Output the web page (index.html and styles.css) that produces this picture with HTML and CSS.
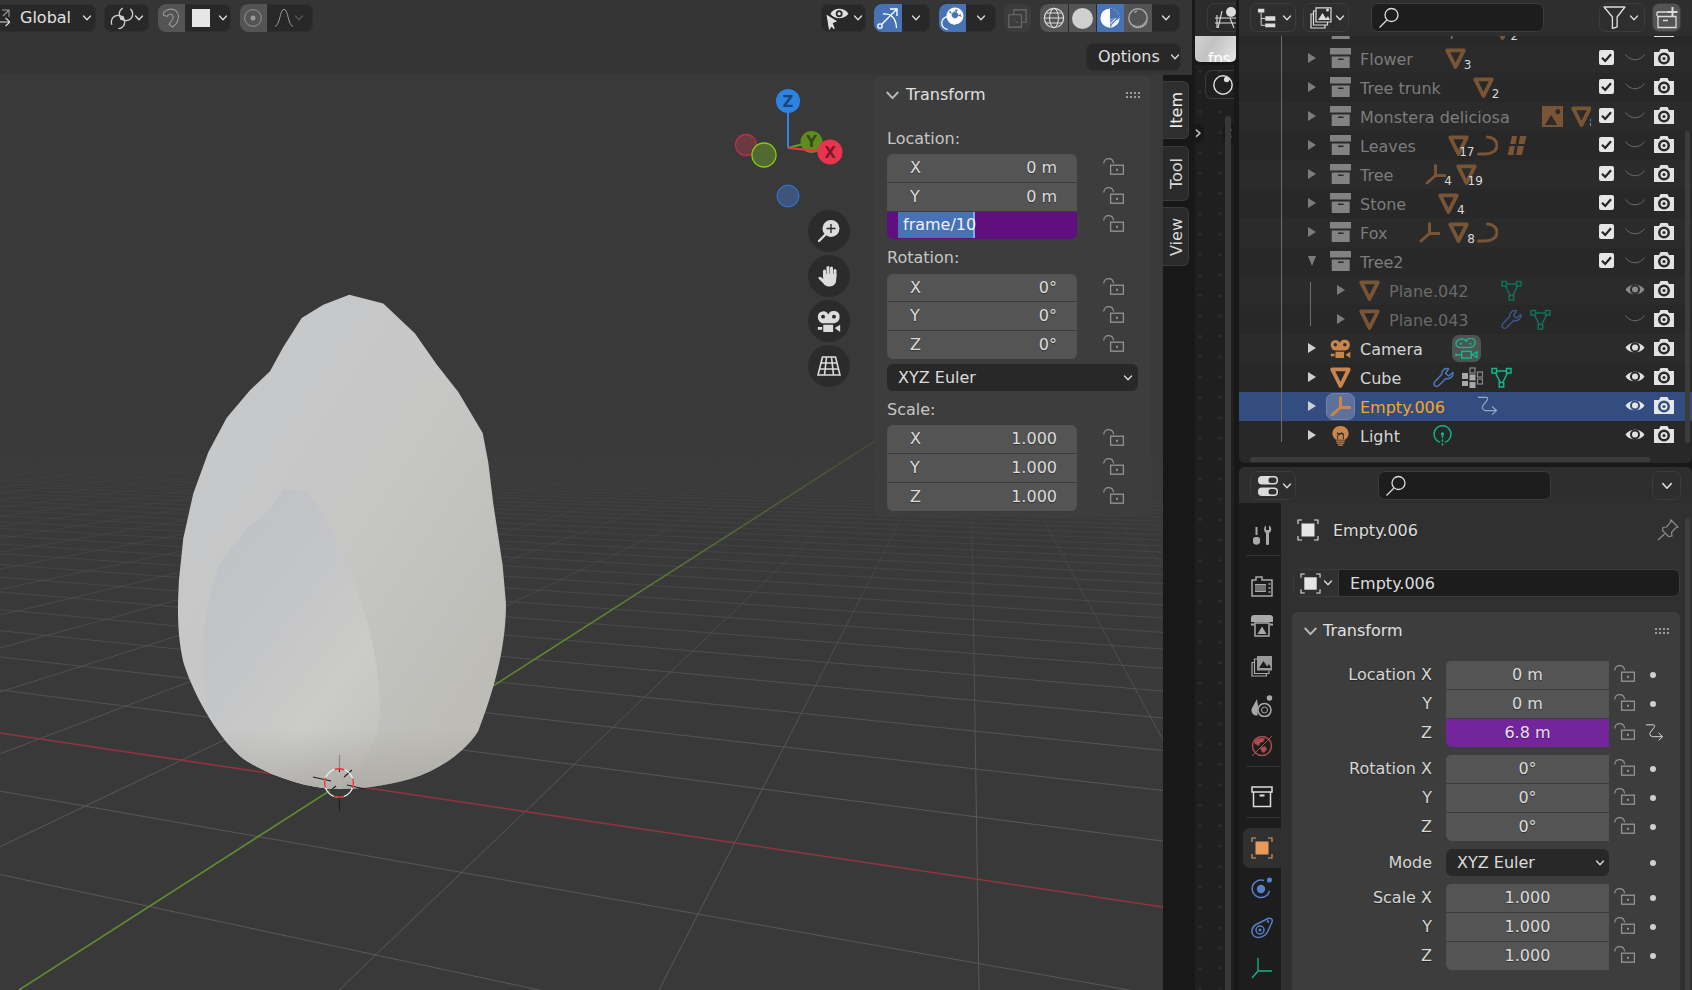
FILE: index.html
```html
<!DOCTYPE html>
<html lang="en">
<head>
<meta charset="utf-8">
<title>Blender</title>
<link rel="stylesheet" href="styles.css">
</head>
<body>
<svg class="defs" aria-hidden="true">
  <symbol id="chev" viewBox="0 0 10 10"><path d="M1.5 3 5 6.8 8.5 3" fill="none" stroke="currentColor" stroke-width="1.3" stroke-linecap="round" stroke-linejoin="round"/></symbol>
  <symbol id="lock" viewBox="0 0 21 17"><path d="M.8 5.6C.8 2.6 3 .7 5.6.7c2.6 0 4.6 1.7 5 4.6" fill="none" stroke="currentColor" stroke-width="1.2"/><rect x="7.6" y="7.2" width="12.8" height="9" fill="none" stroke="currentColor" stroke-width="1.3"/><rect x="13" y="10.8" width="2" height="2" fill="currentColor"/></symbol>
  <symbol id="grip" viewBox="0 0 15 6"><g fill="currentColor"><rect x="0" y="0" width="2" height="2"/><rect x="4" y="0" width="2" height="2"/><rect x="8" y="0" width="2" height="2"/><rect x="12" y="0" width="2" height="2"/><rect x="0" y="4" width="2" height="2"/><rect x="4" y="4" width="2" height="2"/><rect x="8" y="4" width="2" height="2"/><rect x="12" y="4" width="2" height="2"/></g></symbol>
  <symbol id="tri" viewBox="0 0 21 21"><path d="M2.2 2.4H18.800L10.500 19Z" fill="none" stroke="currentColor" stroke-width="3.800" stroke-linejoin="round"/></symbol>
  <symbol id="empty" viewBox="0 0 21 21"><path d="M10.5 1.5V11.5H20M10.5 11.5 2 19" fill="none" stroke="currentColor" stroke-width="3" stroke-linecap="round"/></symbol>
  <symbol id="curve" viewBox="0 0 21 21"><path d="M1.5 19H8C15 19 20 15.5 20 10.5 20 5.5 15.5 2 10.5 2" fill="none" stroke="currentColor" stroke-width="3" stroke-linecap="round"/></symbol>
  <symbol id="hair" viewBox="0 0 21 21"><path d="M6 1H11L9.6 9H4.2ZM14 1H20.5L18.5 9H12.6ZM3.6 11H8.8L7.4 20H1.6ZM11.8 11H18L16 20H10Z" fill="currentColor"/></symbol>
  <symbol id="image" viewBox="0 0 22 22"><path d="M0 0H22V22H0ZM3 20H16L9.5 9.5ZM14 6a2.6 2.6 0 1 0 5.2 0 2.6 2.6 0 1 0-5.2 0Z" fill="currentColor" fill-rule="evenodd"/></symbol>
  <symbol id="collection" viewBox="0 0 21 21"><path d="M0 0H21V6.4H0ZM1.7 8.5H19.7V20H1.7ZM8 10.4V12H13.6V10.4Z" fill="currentColor" fill-rule="evenodd"/></symbol>
  <symbol id="check" viewBox="0 0 15 15"><rect width="15" height="15" rx="2" fill="#e6e6e6"/><path d="M3 7.8 6.2 11 12 4.2" fill="none" stroke="#222" stroke-width="2.2"/></symbol>
  <symbol id="eye" viewBox="0 0 20 15"><path d="M.5 7.5C4.5 1 15.5 1 19.5 7.5 15.5 14 4.5 14 .5 7.5ZM5 7.5a5 5 0 0 0 10 0 5 5 0 0 0-10 0Z" fill="currentColor" fill-rule="evenodd"/><circle cx="10" cy="7.5" r="3" fill="currentColor"/></symbol>
  <symbol id="eyeoff" viewBox="0 0 20 15"><path d="M.5 4.5C5 11.5 15 11.5 19.5 4.5" fill="none" stroke="currentColor" stroke-width="1"/></symbol>
  <symbol id="render" viewBox="0 0 20 18"><path d="M0 4H5L6.5 1H13.5L15 4H20V18H0ZM4 10.5a6 6 0 0 0 12 0 6 6 0 0 0-12 0Z" fill="currentColor" fill-rule="evenodd"/><path d="M6.5 10.5a3.5 3.5 0 1 0 7 0 3.5 3.5 0 1 0-7 0ZM8.4 10.5a1.6 1.6 0 1 1 3.2 0 1.6 1.6 0 1 1-3.2 0Z" fill="currentColor" fill-rule="evenodd"/></symbol>
  <symbol id="wrench" viewBox="0 0 21 21"><path d="M20 5.5 15.7 9 12.5 6.5 15.5 1.8C12 .8 8.5 3 8.7 7.5L1.8 14.8C-.4 18 3 20.800 5.800 18.500L12.800 11.500C16.800 12.300 20.500 9.500 20 5.500Z" fill="none" stroke="currentColor" stroke-width="1.5" stroke-linejoin="round"/></symbol>
  <symbol id="meshdata" viewBox="0 0 21 21"><path d="M3.500 4H17.500L10.500 18" fill="none" stroke="currentColor" stroke-width="1.500"/><path d="M3.500 4 10.500 18" fill="none" stroke="currentColor" stroke-width="1.500"/><g fill="#2a2a2a" stroke="currentColor" stroke-width="1.500"><rect x="1" y="1.500" width="4.500" height="4.500"/><rect x="15.500" y="1.500" width="4.500" height="4.500"/><rect x="8.200" y="15.500" width="4.500" height="4.500"/></g></symbol>
  <symbol id="camdata" viewBox="0 0 24 22"><g fill="none" stroke="currentColor" stroke-width="1.500"><path d="M7 1a5 4.500 0 0 1 5 3 4.500 4.500 0 0 1 9 1c0 3-3 5-5 5H6C3 10 1 8 1 6c0-2.800 3-5 6-5Z"/><rect x="7" y="14" width="10" height="7"/><path d="M18 17.500 23 14.500V20.500ZM1 16V19M6 17.500H1"/></g><rect x="5" y="5" width="2" height="2" fill="currentColor"/><rect x="15" y="5" width="2" height="2" fill="currentColor"/></symbol>
  <symbol id="camera" viewBox="1 0 20.500 22"><path d="M1 7a5 5 0 0 1 9.500-2 5.500 5.500 0 0 1 10.500 2.500C21 11 18 13 15 13H6C3 13 1 10 1 7ZM4 7a1.800 1.800 0 1 0 3.600 0 1.800 1.800 0 1 0-3.600 0ZM14 7a1.800 1.800 0 1 0 3.600 0 1.800 1.800 0 1 0-3.600 0Z" fill="currentColor" fill-rule="evenodd"/><path d="M6 14.500H15V21H6ZM16.500 17.500 21.500 14.500V21ZM1 16.500H5V19H1Z" fill="currentColor"/></symbol>
  <symbol id="bulb" viewBox="0 0 21 22"><path d="M10.500 1C15.500 1 19 4.500 19 9c0 3-2 5-3.500 6.500H5.500C4 14 2 12 2 9c0-4.500 3.500-8 8.500-8Z" fill="currentColor"/><path d="M7 8 9 10 11.500 8.500 14 10" fill="none" stroke="#2a2a2a" stroke-width="1.500"/><path d="M7.500 10.500V15M13.500 10.500V15" stroke="#2a2a2a" stroke-width="1"/><path d="M6 17H15M6.500 19H14.500M8 21H13" stroke="currentColor" stroke-width="1.300"/></symbol>
  <symbol id="lightdata" viewBox="0 0 21 22"><path d="M8 18A8.800 8.800 0 1 1 13 18" fill="none" stroke="currentColor" stroke-width="1.500"/><circle cx="10.500" cy="9.500" r="1.800" fill="currentColor"/><path d="M10.500 11V22" stroke="currentColor" stroke-width="1.500" stroke-dasharray="2.500 1.500"/></symbol>
  <symbol id="blocks" viewBox="0 0 21 21"><g fill="#a8a8a8"><rect x="0" y="6" width="6" height="6"/><rect x="7.500" y="7.500" width="6" height="6"/><rect x="7.500" y="15" width="6" height="6"/><rect x="0" y="14" width="6" height="5"/></g><g fill="none" stroke="#8b8b8b" stroke-width="1.200"><rect x="8" y="1" width="5" height="5"/><rect x="15.500" y="5" width="5" height="5"/><rect x="15.500" y="12" width="5" height="5"/></g></symbol>
  <symbol id="anim" viewBox="0 0 23 22"><path d="M1 1H10C12 1 12 3 11 4.200L6.500 10C5 12 6 15 9 15.500L21 15.500M16.500 11 21.500 15.500 16.500 20" fill="none" stroke="currentColor" stroke-width="1.200"/></symbol>
  <symbol id="search" viewBox="0 0 22 22"><circle cx="13.500" cy="8" r="6.500" fill="none" stroke="currentColor" stroke-width="1.300"/><path d="M9 13 1.500 20.500" stroke="currentColor" stroke-width="1.300"/></symbol>
  <symbol id="objsq" viewBox="0 0 22 22"><path d="M1 5V1H5M17 1H21V5M1 17V21H5M21 17V21H17" fill="none" stroke="currentColor" stroke-width="1.100"/><rect x="4.500" y="4.500" width="13" height="13" fill="currentColor"/></symbol>
  <symbol id="pin" viewBox="0 0 22 22"><path d="M14 1 21 8 18.500 9 14.500 13.500 15 17 11.500 17.500 5.500 11.500 6 8.500 9.500 8 13 4Z M7.500 15 1 21" fill="none" stroke="currentColor" stroke-width="1.200"/></symbol>
  <symbol id="outliner" viewBox="0 0 24 22"><path d="M1 1H8V5H1ZM9 9H20V14H9ZM9 17H20V21H9Z" fill="currentColor"/><path d="M4.500 5V19H9M4.500 11.500H9" fill="none" stroke="currentColor" stroke-width="1"/></symbol>
  <symbol id="displaymode" viewBox="0 0 22 22"><path d="M6 .8H21V15H6Z" fill="none" stroke="currentColor" stroke-width="1.200"/><path d="M8 13 12.500 6 16 11.500 18 9 20 13ZM16 3a1.500 1.500 0 1 0 3 0 1.500 1.500 0 1 0-3 0Z" fill="currentColor"/><path d="M6 4H3.500V18H17.500V15M3.500 7H1V21H15V18" fill="none" stroke="currentColor" stroke-width="1.200"/></symbol>
  <symbol id="filter" viewBox="0 0 22 22"><path d="M1 1H21L13.500 10.500V20L9 21.500V10.500Z" fill="none" stroke="currentColor" stroke-width="1.300" stroke-linejoin="round"/></symbol>
  <symbol id="newcol" viewBox="0 0 22 22"><path d="M1 5H12M1 9.500H20V20.500H2V9.500M1 5V9M7 13.500H12" fill="none" stroke="currentColor" stroke-width="1.300"/><path d="M16.500 0V10M11.500 5H21.500" stroke="currentColor" stroke-width="2"/></symbol>
  <symbol id="propsmode" viewBox="0 0 22 22"><rect x="1" y="1" width="20" height="8.500" rx="4" fill="currentColor"/><rect x="11.500" y="2.500" width="8" height="5.500" rx="2.500" fill="#2f2f2f"/><rect x="1" y="12.500" width="20" height="8.500" rx="4" fill="currentColor"/><rect x="11.500" y="14" width="8" height="5.500" rx="2.500" fill="#2f2f2f"/></symbol>
  <symbol id="tool" viewBox="0 0 22 22"><path d="M15 1.500V6H18V1.500C21 3 21 7.500 18 9V19.500C18 21.500 15 21.500 15 19.500V9C12.500 7.500 12.500 3 15 1.500ZM4.500 3H6.500V11H4.500Z" fill="currentColor"/><path d="M2 14.500C2 12.500 9 12.500 9 14.500V18C9 21.500 2 21.500 2 18Z" fill="currentColor"/></symbol>
  <symbol id="renderTab" viewBox="0 0 22 22"><path d="M1 5H5V2H11V5H21V21H1Z" fill="none" stroke="currentColor" stroke-width="1.500"/><path d="M4 9H15V17H4Z" fill="currentColor"/><path d="M4 11H15M4 13H15M4 15H15" stroke="#1d1d1d" stroke-width=".8"/><path d="M17.500 9H19.500M17.500 13H19.500M17.500 17H19.500" stroke="currentColor" stroke-width="1.500"/></symbol>
  <symbol id="output" viewBox="0 0 22 22"><path d="M0 3C0 1 1 0 3 0H19C21 0 22 1 22 3V7H0Z" fill="currentColor"/><path d="M0 8.500H3V10.500H0ZM19 8.500H22V10.500H19Z" fill="currentColor"/><path d="M4 8H18V21H4Z" fill="none" stroke="currentColor" stroke-width="1.500"/><path d="M6.500 19 11 11.500 15.500 19Z" fill="currentColor"/></symbol>
  <symbol id="viewlayer" viewBox="0 0 22 22"><path d="M6 1H21V15.500H6Z" fill="currentColor" fill-opacity=".9"/><path d="M8 13 12.500 6 16 11.500 18 9 20 13Z" fill="#1d1d1d"/><path d="M6 4H3.500V18.500H18V15.500M3.500 7.500H1V21H15.500V18.500" fill="none" stroke="currentColor" stroke-width="1.200"/></symbol>
  <symbol id="scene" viewBox="0 0 22 22"><path d="M6 4 1 13C-1 18 3 21 6.500 20.500L7 11Z" fill="currentColor"/><circle cx="18.500" cy="3" r="2.800" fill="currentColor"/><circle cx="13.500" cy="15" r="6.500" fill="#1d1d1d" stroke="currentColor" stroke-width="1.500"/><circle cx="13.500" cy="15" r="3" fill="none" stroke="currentColor" stroke-width="1"/></symbol>
  <symbol id="world" viewBox="0 0 22 22"><circle cx="11" cy="11" r="9.500" fill="none" stroke="currentColor" stroke-width="1.500"/><path d="M3 6C6 3 12 2 14 4L12 7 9 8 8 11 4 9ZM9 13 14 11 16 14 13 18 11 17Z" fill="currentColor"/><path d="M1 21 21 1" stroke="currentColor" stroke-width="1"/></symbol>
  <symbol id="colltab" viewBox="0 0 22 22"><path d="M1 1H21V6H1ZM2.500 6V20.500H19.500V6" fill="none" stroke="currentColor" stroke-width="1.500"/><rect x="8.500" y="8.500" width="5" height="2" fill="currentColor"/></symbol>
  <symbol id="physics" viewBox="0 0 22 22"><path d="M13 3.500A8.800 8.800 0 1 0 18.500 14" fill="none" stroke="currentColor" stroke-width="1.500"/><circle cx="10" cy="12" r="4.200" fill="currentColor"/><circle cx="18.500" cy="3" r="2.600" fill="currentColor"/></symbol>
  <symbol id="constraint" viewBox="0 0 22 22"><path d="M17 1.500C19.500 .5 22 2 21 5L17 14C14.500 20 7 22 3 19 -.5 16 .5 10 5 7.500Z" fill="none" stroke="currentColor" stroke-width="1.500" stroke-linejoin="round"/><circle cx="9" cy="13" r="4" fill="none" stroke="currentColor" stroke-width="1.500"/><circle cx="9" cy="13" r="1.500" fill="currentColor"/><circle cx="17" cy="4.500" r="1.200" fill="currentColor"/></symbol>
  <symbol id="axes" viewBox="0 0 22 22"><path d="M7 1V14H21M7 14 1 21" fill="none" stroke="currentColor" stroke-width="1.300"/></symbol>
  <symbol id="hand" viewBox="0 0 24 24"><path d="M7.500 13V7M11 11V3.500M14.500 11V4M18 12V6.500" stroke="currentColor" stroke-width="3" stroke-linecap="round"/><path d="M6 11C9 9 18 9 19.500 11L19 18C18 21 15 22.500 12 22.500 9 22.500 7.500 21 6 19L1.500 14.500C1 13 3 12 4.500 13.500L6.500 15Z" fill="currentColor"/></symbol>
  <symbol id="zoomplus" viewBox="0 0 24 24"><circle cx="14" cy="9.500" r="8.500" fill="currentColor"/><path d="M14 5V14M9.500 9.500H18.500" stroke="#2b2b2b" stroke-width="1.400"/><path d="M2 22 8 16" stroke="currentColor" stroke-width="2.400" stroke-linecap="round"/></symbol>
  <symbol id="persp" viewBox="0 0 24 24"><path d="M5.500 3H18.500L23 21H1Z" fill="none" stroke="currentColor" stroke-width="1.600"/><path d="M9.500 3 7.500 21M14.500 3 16.500 21M4 9H20M2.500 15H21.500" stroke="currentColor" stroke-width="1.600"/></symbol>
  <symbol id="orient" viewBox="0 0 20 20"><path d="M12 2H19V9M19 2 13 8" fill="none" stroke="#9a9a9a" stroke-width="1.100"/><path d="M0 14H20M15.500 10 20 14 15.500 18" fill="none" stroke="currentColor" stroke-width="1.200"/></symbol>
  <symbol id="link" viewBox="0 0 24 24"><circle cx="16" cy="8" r="6.700" fill="none" stroke="currentColor" stroke-width="1.300" stroke-dasharray="28 8"/><circle cx="8" cy="16" r="6.700" fill="none" stroke="currentColor" stroke-width="1.300" stroke-dasharray="28 8" stroke-dashoffset="18"/><circle cx="12" cy="12" r="2.200" fill="currentColor"/></symbol>
  <symbol id="magnet" viewBox="0 0 22 24"><path d="M2 9C.5 2.500 12 -1 17 3.500 21.500 7.500 20.500 14 17 19L13 23 8.500 19.500 12 15C14 12 14 9.500 12 8 10 6.500 7.500 7.500 6.500 10Z" fill="none" stroke="currentColor" stroke-width="1.300" stroke-linejoin="round"/></symbol>
  <symbol id="target" viewBox="0 0 24 24"><circle cx="12" cy="12" r="10" fill="none" stroke="currentColor" stroke-width="1.100"/><circle cx="12" cy="12" r="3" fill="currentColor"/></symbol>
  <symbol id="bell" viewBox="0 0 24 24"><path d="M1 22C7 22 7 1.500 12 1.500 17 1.500 17 22 23 22" fill="none" stroke="currentColor" stroke-width="1.200"/></symbol>
  <symbol id="seleye" viewBox="0 0 24 24"><path d="M6 8C9 2 19 2 22.500 8 19 13.500 9 13.500 6 8Z" fill="currentColor"/><circle cx="14" cy="8" r="3.200" fill="#2a2a2a"/><circle cx="14" cy="8" r="1.500" fill="currentColor"/><path d="M3 10 11 15 7.500 16.500 9.500 22 7 19 5 22Z" fill="currentColor" stroke="currentColor" stroke-width="1"/></symbol>
  <symbol id="gizmoic" viewBox="0 0 24 24"><circle cx="4" cy="20" r="2.200" fill="none" stroke="currentColor" stroke-width="1.300"/><path d="M6 18 21 3M14 3H21V10" fill="none" stroke="currentColor" stroke-width="1.400"/><path d="M7 8C14 7 20 11 20.500 22" fill="none" stroke="currentColor" stroke-width="1.300"/></symbol>
  <symbol id="overlay" viewBox="0 0 24 24"><path d="M15 1.500a8.500 8.500 0 0 1 0 17 8.500 8.500 0 0 1-8-5.500 8.500 8.500 0 0 1 8-11.500ZM12.500 7a3.200 3.200 0 1 0 5 4 3.200 3.200 0 1 0-5-4ZM15 3.500 16 7 18 3.700ZM9 6 12 8.500 10.500 4.500ZM20.500 8 18 9.500 21.500 11Z" fill="currentColor" fill-rule="evenodd"/><circle cx="8" cy="17" r="6.300" fill="none" stroke="currentColor" stroke-width="1.300" stroke-dasharray="22 8" stroke-dashoffset="-10"/></symbol>
  <symbol id="xray" viewBox="0 0 24 24"><path d="M8 3H21V16H17M8 3V8" fill="none" stroke="currentColor" stroke-width="1.100"/><path d="M3 8H16V21H3Z" fill="none" stroke="currentColor" stroke-width="1.100"/><path d="M9 13V14M12 16H10" stroke="currentColor" stroke-width="1.100"/></symbol>
  <symbol id="wire" viewBox="0 0 24 24"><circle cx="12" cy="12" r="10.500" fill="none" stroke="currentColor" stroke-width="1.300"/><ellipse cx="12" cy="12" rx="4.800" ry="10.500" fill="none" stroke="currentColor" stroke-width="1.100"/><path d="M1.500 12H22.500M3.500 6.500H20.500M3.500 17.500H20.500" stroke="currentColor" stroke-width="1.100"/></symbol>
  <symbol id="mat" viewBox="0 0 24 24"><circle cx="12" cy="12" r="10.500" fill="currentColor"/><path d="M12 12V1.500A10.500 10.500 0 0 1 22.500 12Z" fill="#4772b3"/><path d="M12 12H22.500L12 22.500Z" fill="#4772b3" fill-opacity=".8"/><path d="M14 20 20 14M16 21 21 16M12 18.500 18 12.500" stroke="#fff" stroke-width="1"/></symbol>
  <symbol id="rendball" viewBox="0 0 24 24"><circle cx="12" cy="12" r="10" fill="none" stroke="currentColor" stroke-width="1.600"/><path d="M21 16A10 10 0 0 1 6 20" fill="none" stroke="currentColor" stroke-width="3" stroke-dasharray="1.500 1"/><path d="M8 6A7 7 0 0 1 11 4.500" fill="none" stroke="currentColor" stroke-width="1.400"/></symbol>
  <symbol id="scenepick" viewBox="0 0 24 24"><circle cx="17" cy="6" r="5" fill="currentColor"/><path d="M3 9V22M1 12H23M1 17H23M8 5 4 22M16 12 20 22" fill="none" stroke="currentColor" stroke-width="1.100"/></symbol>
  <symbol id="ballic" viewBox="0 0 24 24"><circle cx="12" cy="12" r="10" fill="none" stroke="currentColor" stroke-width="1.600"/><circle cx="16" cy="6" r="3" fill="currentColor"/></symbol>
</svg>

<main class="viewport-area">
  <header class="vp-header">
    <div class="hrow">
      <div class="pill global"><svg class="i20"><use href="#orient"/></svg><span class="txt">Global</span><svg class="i10"><use href="#chev"/></svg></div>
      <div class="pill linkp"><svg class="i24"><use href="#link"/></svg><svg class="i10"><use href="#chev"/></svg></div>
      <div class="pill snap"><span class="seg grey dimfg"><svg class="i24"><use href="#magnet"/></svg></span><span class="seg wide"><span class="whitebox"></span><svg class="i10"><use href="#chev"/></svg></span></div>
      <div class="pill prop"><span class="seg grey dimfg"><svg class="i24"><use href="#target"/></svg></span><span class="seg wide dimfg"><svg class="i24"><use href="#bell"/></svg><svg class="i10 faint"><use href="#chev"/></svg></span></div>
      <div class="spacer"></div>
      <div class="pill vis"><svg class="i24"><use href="#seleye"/></svg><svg class="i10"><use href="#chev"/></svg></div>
      <div class="pill gizp"><span class="seg blue"><svg class="i24"><use href="#gizmoic"/></svg></span><span class="seg"><svg class="i10"><use href="#chev"/></svg></span></div>
      <div class="pill ovp"><span class="seg blue"><svg class="i24"><use href="#overlay"/></svg></span><span class="seg cw"><svg class="i10"><use href="#chev"/></svg></span></div>
      <div class="pill xr"><span class="seg mid dimfg"><svg class="i24"><use href="#xray"/></svg></span></div>
      <div class="pill shade"><span class="seg grey"><svg class="i24"><use href="#wire"/></svg></span><span class="seg grey solid"><span class="disc"></span></span><span class="seg blue"><svg class="i24"><use href="#mat"/></svg></span><span class="seg grey"><svg class="i24"><use href="#rendball"/></svg></span><span class="seg"><svg class="i10"><use href="#chev"/></svg></span></div>
    </div>
    <div class="hrow second">
      <div class="spacer"></div>
      <div class="pill options"><span class="txt">Options</span><svg class="i10"><use href="#chev"/></svg></div>
    </div>
  </header>

  <div class="vp-body">
    <section class="canvas">
      <svg class="scene3d" viewBox="0 75 1163 915" preserveAspectRatio="none">
        <defs>
          <linearGradient id="gridfade" gradientUnits="userSpaceOnUse" x1="0" y1="445" x2="0" y2="800"><stop offset="0" stop-color="#555" stop-opacity="0"/><stop offset=".3" stop-color="#555" stop-opacity=".35"/><stop offset=".6" stop-color="#555" stop-opacity=".75"/><stop offset="1" stop-color="#585858" stop-opacity="1"/></linearGradient>
          <linearGradient id="greenfade" gradientUnits="userSpaceOnUse" x1="0" y1="440" x2="0" y2="640"><stop offset="0" stop-color="#5f8530" stop-opacity=".2"/><stop offset="1" stop-color="#618a30"/></linearGradient>
          <linearGradient id="eggA" x1=".1" y1="0" x2=".95" y2=".85"><stop offset="0" stop-color="#c6c8cc"/><stop offset=".5" stop-color="#c7c7c6"/><stop offset="1" stop-color="#bcbbb5"/></linearGradient>
          <linearGradient id="eggB" x1=".15" y1="0" x2=".9" y2="1"><stop offset="0" stop-color="#bfc1c7"/><stop offset=".4" stop-color="#c4c5c7"/><stop offset=".7" stop-color="#cbcbc8"/><stop offset="1" stop-color="#c2c1bc"/></linearGradient>
          <linearGradient id="eggBottom" x1="0" y1="0" x2="0" y2="1"><stop offset=".72" stop-color="#a5a39e" stop-opacity="0"/><stop offset="1" stop-color="#a5a39e" stop-opacity=".7"/></linearGradient>
          <clipPath id="eggClip"><path d="M349.300 294.800 383.300 303.400 415 333.400 436.700 364.400 458.300 392 482.700 433 488.300 462.500 493.300 503.800 502.700 565.800 506 603.700C506 640 498 680 478.300 731 465 752 440 770 410 779 385 786 360 789 336.700 789 305 788 268 775 243.300 758.700 222 742 195 700 183.300 662 176 630 178 600 179 579.600L183.300 538.300 193.300 493.500 208.300 452.200 226.700 417.700 250 390.200 270 371.300 283.300 347 301.700 317.900 323.300 304.800Z"/></clipPath>
        </defs>
        <path id="grid-a" fill="none" stroke="url(#gridfade)" stroke-width="1"/>
        <path id="grid-b" fill="none" stroke="url(#gridfade)" stroke-width="1"/>
        <path d="M0 733 1163 907" stroke="#91353f" stroke-width="1.600"/>
        <path d="M19 990 875 441" stroke="url(#greenfade)" stroke-width="1.600"/>
        <path class="egg" fill="url(#eggA)" d="M349.300 294.800 383.300 303.400 415 333.400 436.700 364.400 458.300 392 482.700 433 488.300 462.500 493.300 503.800 502.700 565.800 506 603.700C506 640 498 680 478.300 731 465 752 440 770 410 779 385 786 360 789 336.700 789 305 788 268 775 243.300 758.700 222 742 195 700 183.300 662 176 630 178 600 179 579.600L183.300 538.300 193.300 493.500 208.300 452.200 226.700 417.700 250 390.200 270 371.300 283.300 347 301.700 317.900 323.300 304.800Z"/>
        <path class="egg" clip-path="url(#eggClip)" fill="url(#eggB)" d="M283.300 490 306.700 490.700 323.300 514 340 548.600C360 592 380 650 380 710 380 745 358 768 336.700 795L200 790 208.300 717.300 C203 690 201 640 206.700 610.600L218.300 565.800 246.700 527.900 265 514Z"/>
        <rect x="170" y="560" width="345" height="235" clip-path="url(#eggClip)" fill="url(#eggBottom)"/>
        <g class="cursor3d">
          <path d="M339.500 755V772M339.500 795V812M313 777 331 781M347 785 365 789M330 791 336 786M344 777 352 770" fill="none" stroke="#222" stroke-width="1.100"/>
          <path d="M339.500 755V768" stroke="#8a8a8a" stroke-width="1.100"/>
          <circle cx="339" cy="783" r="14.300" fill="none" stroke="#f0f0f0" stroke-width="1.300"/>
          <circle cx="339" cy="783" r="14.300" fill="none" stroke="#e02a2a" stroke-width="1.400" stroke-dasharray="10 12.460" stroke-dashoffset="5"/>
        </g>
      </svg>

      <svg class="gizmo" viewBox="0 0 130 150">
        <circle cx="26" cy="70" r="10.500" fill="#6b3a40" stroke="#b03444" stroke-width="1.300"/>
        <circle cx="68" cy="121" r="10.800" fill="#3e5478" stroke="#2e70c4" stroke-width="1.300"/>
        <path d="M68 26V73" stroke="#2e83e0" stroke-width="2"/>
        <path d="M68 73 91 67" stroke="#6a9a20" stroke-width="2"/>
        <circle cx="91.500" cy="67" r="11" fill="#5f8c1e"/>
        <text class="gz" x="91.500" y="72">Y</text>
        <path d="M68 73 110 77" stroke="#e8344e" stroke-width="2"/>
        <circle cx="44" cy="80" r="12" fill="#526a32" stroke="#88cc10" stroke-width="1.300"/>
        <circle cx="68" cy="26" r="12" fill="#2e83e0"/>
        <text class="gz" x="68" y="31.500">Z</text>
        <circle cx="110" cy="77" r="12.500" fill="#e8344e"/>
        <text class="gz" x="110" y="82.500">X</text>
      </svg>

      <nav class="navgiz">
        <span class="navbtn"><svg class="i24"><use href="#zoomplus"/></svg></span>
        <span class="navbtn"><svg class="i24"><use href="#hand"/></svg></span>
        <span class="navbtn"><svg class="i24"><use href="#camera"/></svg></span>
        <span class="navbtn"><svg class="i24"><use href="#persp"/></svg></span>
      </nav>

      <aside class="npanel">
        <div class="phead"><svg class="pchev"><use href="#chev"/></svg><span>Transform</span><svg class="gripi"><use href="#grip"/></svg></div>
        <div class="flabel first">Location:</div>
        <div class="vec">
          <div class="num"><span>X</span><b>0 m</b></div><svg class="lk"><use href="#lock"/></svg>
          <div class="num"><span>Y</span><b>0 m</b></div><svg class="lk"><use href="#lock"/></svg>
          <div class="num editing"><span class="sel">frame/10</span></div><svg class="lk"><use href="#lock"/></svg>
        </div>
        <div class="flabel">Rotation:</div>
        <div class="vec">
          <div class="num"><span>X</span><b>0°</b></div><svg class="lk"><use href="#lock"/></svg>
          <div class="num"><span>Y</span><b>0°</b></div><svg class="lk"><use href="#lock"/></svg>
          <div class="num"><span>Z</span><b>0°</b></div><svg class="lk"><use href="#lock"/></svg>
        </div>
        <div class="select side"><span>XYZ Euler</span><svg class="i10"><use href="#chev"/></svg></div>
        <div class="flabel">Scale:</div>
        <div class="vec">
          <div class="num"><span>X</span><b>1.000</b></div><svg class="lk"><use href="#lock"/></svg>
          <div class="num"><span>Y</span><b>1.000</b></div><svg class="lk"><use href="#lock"/></svg>
          <div class="num"><span>Z</span><b>1.000</b></div><svg class="lk"><use href="#lock"/></svg>
        </div>
      </aside>
    </section>
    <div class="vtabs">
      <div class="vtab active item"><span>Item</span></div>
      <div class="vtab tool"><span>Tool</span></div>
      <div class="vtab view"><span>View</span></div>
    </div>
  </div>
</main>

<div class="strip">
  <div class="strip-top"><span class="stripbtn"><svg class="i24"><use href="#scenepick"/></svg></span></div>
  <div class="strip-img"><span>fps</span></div>
  <div class="strip-low">
    <span class="stripbtn low"><svg class="i24"><use href="#ballic"/></svg></span>
    <span class="handle left">›</span>
    <span class="handle right">‹</span>
    <span class="stripbar"></span>
  </div>
</div>

<div class="rightcol">
  <section class="outliner">
    <div class="ohead">
      <span class="hbtn m1"><svg class="i24"><use href="#outliner"/></svg><svg class="i10"><use href="#chev"/></svg></span>
      <span class="hbtn m2"><svg class="i24"><use href="#displaymode"/></svg><svg class="i10"><use href="#chev"/></svg></span>
      <span class="searchbox s1"><svg class="i22"><use href="#search"/></svg></span>
      <span class="hbtn m3"><svg class="i24"><use href="#filter"/></svg><svg class="i10"><use href="#chev"/></svg></span>
      <span class="hbtn m4"><svg class="i24"><use href="#newcol"/></svg></span>
    </div>
    <div class="olist">
      <i class="treeline"></i><i class="treeline sub"></i>
      <div class="rows">
        <div class="row dim"><i class="arrow"></i><svg class="ic col"><use href="#collection"/></svg><span class="name">Grass clump</span><span class="subs"><span class="sub"><svg class="ic o"><use href="#tri"/></svg><b>2</b></span></span><span class="rest"><span class="sl"><svg class="ck"><use href="#check"/></svg></span><span class="sl"><svg class="ey off"><use href="#eyeoff"/></svg></span><span class="sl"><svg class="rn"><use href="#render"/></svg></span></span></div>
        <div class="row dim alt"><i class="arrow"></i><svg class="ic col"><use href="#collection"/></svg><span class="name">Flower</span><span class="subs"><span class="sub"><svg class="ic o"><use href="#tri"/></svg><b>3</b></span></span><span class="rest"><span class="sl"><svg class="ck"><use href="#check"/></svg></span><span class="sl"><svg class="ey off"><use href="#eyeoff"/></svg></span><span class="sl"><svg class="rn"><use href="#render"/></svg></span></span></div>
        <div class="row dim"><i class="arrow"></i><svg class="ic col"><use href="#collection"/></svg><span class="name">Tree trunk</span><span class="subs"><span class="sub"><svg class="ic o"><use href="#tri"/></svg><b>2</b></span></span><span class="rest"><span class="sl"><svg class="ck"><use href="#check"/></svg></span><span class="sl"><svg class="ey off"><use href="#eyeoff"/></svg></span><span class="sl"><svg class="rn"><use href="#render"/></svg></span></span></div>
        <div class="row dim alt"><i class="arrow"></i><svg class="ic col"><use href="#collection"/></svg><span class="name">Monstera deliciosa</span><span class="subs"><span class="sub"><svg class="ic o"><use href="#image"/></svg></span><span class="sub"><svg class="ic o"><use href="#tri"/></svg><b>8</b></span></span><span class="rest"><span class="sl"><svg class="ck"><use href="#check"/></svg></span><span class="sl"><svg class="ey off"><use href="#eyeoff"/></svg></span><span class="sl"><svg class="rn"><use href="#render"/></svg></span></span></div>
        <div class="row dim"><i class="arrow"></i><svg class="ic col"><use href="#collection"/></svg><span class="name">Leaves</span><span class="subs"><span class="sub"><svg class="ic o"><use href="#tri"/></svg><b>17</b></span><span class="sub"><svg class="ic o"><use href="#curve"/></svg></span><span class="sub"><svg class="ic o"><use href="#hair"/></svg></span></span><span class="rest"><span class="sl"><svg class="ck"><use href="#check"/></svg></span><span class="sl"><svg class="ey off"><use href="#eyeoff"/></svg></span><span class="sl"><svg class="rn"><use href="#render"/></svg></span></span></div>
        <div class="row dim alt"><i class="arrow"></i><svg class="ic col"><use href="#collection"/></svg><span class="name">Tree</span><span class="subs"><span class="sub counted"><svg class="ic o"><use href="#empty"/></svg><b>4</b></span><span class="sub"><svg class="ic o"><use href="#tri"/></svg><b>19</b></span></span><span class="rest"><span class="sl"><svg class="ck"><use href="#check"/></svg></span><span class="sl"><svg class="ey off"><use href="#eyeoff"/></svg></span><span class="sl"><svg class="rn"><use href="#render"/></svg></span></span></div>
        <div class="row dim"><i class="arrow"></i><svg class="ic col"><use href="#collection"/></svg><span class="name">Stone</span><span class="subs"><span class="sub"><svg class="ic o"><use href="#tri"/></svg><b>4</b></span></span><span class="rest"><span class="sl"><svg class="ck"><use href="#check"/></svg></span><span class="sl"><svg class="ey off"><use href="#eyeoff"/></svg></span><span class="sl"><svg class="rn"><use href="#render"/></svg></span></span></div>
        <div class="row dim alt"><i class="arrow"></i><svg class="ic col"><use href="#collection"/></svg><span class="name">Fox</span><span class="subs"><span class="sub"><svg class="ic o"><use href="#empty"/></svg></span><span class="sub"><svg class="ic o"><use href="#tri"/></svg><b>8</b></span><span class="sub"><svg class="ic o"><use href="#curve"/></svg></span></span><span class="rest"><span class="sl"><svg class="ck"><use href="#check"/></svg></span><span class="sl"><svg class="ey off"><use href="#eyeoff"/></svg></span><span class="sl"><svg class="rn"><use href="#render"/></svg></span></span></div>
        <div class="row dim"><i class="arrow down"></i><svg class="ic col"><use href="#collection"/></svg><span class="name">Tree2</span><span class="subs"></span><span class="rest"><span class="sl"><svg class="ck"><use href="#check"/></svg></span><span class="sl"><svg class="ey off"><use href="#eyeoff"/></svg></span><span class="sl"><svg class="rn"><use href="#render"/></svg></span></span></div>
        <div class="row dim alt child"><i class="arrow"></i><svg class="ic o"><use href="#tri"/></svg><span class="name">Plane.042</span><span class="subs"><span class="sub"><svg class="ic gd"><use href="#meshdata"/></svg></span></span><span class="rest"><span class="sl"></span><span class="sl"><svg class="ey gr"><use href="#eye"/></svg></span><span class="sl"><svg class="rn"><use href="#render"/></svg></span></span></div>
        <div class="row dim child"><i class="arrow"></i><svg class="ic o"><use href="#tri"/></svg><span class="name">Plane.043</span><span class="subs"><span class="sub"><svg class="ic bd"><use href="#wrench"/></svg></span><span class="sub"><svg class="ic gd"><use href="#meshdata"/></svg></span></span><span class="rest"><span class="sl"></span><span class="sl"><svg class="ey off"><use href="#eyeoff"/></svg></span><span class="sl"><svg class="rn"><use href="#render"/></svg></span></span></div>
        <div class="row alt"><i class="arrow"></i><svg class="ic or"><use href="#camera"/></svg><span class="name">Camera</span><span class="subs"><span class="sub box"><svg class="ic gb"><use href="#camdata"/></svg></span></span><span class="rest"><span class="sl"></span><span class="sl"><svg class="ey"><use href="#eye"/></svg></span><span class="sl"><svg class="rn"><use href="#render"/></svg></span></span></div>
        <div class="row"><i class="arrow"></i><svg class="ic or"><use href="#tri"/></svg><span class="name">Cube</span><span class="subs"><span class="sub"><svg class="ic bb"><use href="#wrench"/></svg></span><span class="sub"><svg class="ic"><use href="#blocks"/></svg></span><span class="sub"><svg class="ic gb"><use href="#meshdata"/></svg></span></span><span class="rest"><span class="sl"></span><span class="sl"><svg class="ey"><use href="#eye"/></svg></span><span class="sl"><svg class="rn"><use href="#render"/></svg></span></span></div>
        <div class="row active"><i class="arrow"></i><span class="activebox"><svg class="ic or"><use href="#empty"/></svg></span><span class="name">Empty.006</span><span class="subs"><span class="sub"><svg class="ic an"><use href="#anim"/></svg></span></span><span class="rest"><span class="sl"></span><span class="sl"><svg class="ey"><use href="#eye"/></svg></span><span class="sl"><svg class="rn"><use href="#render"/></svg></span></span></div>
        <div class="row"><i class="arrow"></i><svg class="ic or"><use href="#bulb"/></svg><span class="name">Light</span><span class="subs"><span class="sub"><svg class="ic gb"><use href="#lightdata"/></svg></span></span><span class="rest"><span class="sl"></span><span class="sl"><svg class="ey"><use href="#eye"/></svg></span><span class="sl"><svg class="rn"><use href="#render"/></svg></span></span></div>
      </div>
      <i class="vscroll"></i>
      <i class="hscroll"></i>
    </div>
  </section>

  <section class="props">
    <div class="phdr">
      <span class="hbtn m1"><svg class="i24"><use href="#propsmode"/></svg><svg class="i10"><use href="#chev"/></svg></span>
      <span class="searchbox s2"><svg class="i22"><use href="#search"/></svg></span>
      <span class="hbtn m5"><svg class="i10"><use href="#chev"/></svg></span>
    </div>
    <div class="pbody">
      <nav class="ptabs">
        <span class="ptab"><svg class="ti"><use href="#tool"/></svg></span>
        <i class="psep"></i>
        <span class="ptab"><svg class="ti"><use href="#renderTab"/></svg></span>
        <span class="ptab"><svg class="ti"><use href="#output"/></svg></span>
        <span class="ptab"><svg class="ti"><use href="#viewlayer"/></svg></span>
        <span class="ptab"><svg class="ti"><use href="#scene"/></svg></span>
        <span class="ptab red"><svg class="ti"><use href="#world"/></svg></span>
        <i class="psep"></i>
        <span class="ptab white"><svg class="ti"><use href="#colltab"/></svg></span>
        <i class="psep"></i>
        <span class="ptab on"><svg class="ti"><use href="#objsq"/></svg></span>
        <span class="ptab bluei"><svg class="ti"><use href="#physics"/></svg></span>
        <span class="ptab bluei"><svg class="ti"><use href="#constraint"/></svg></span>
        <span class="ptab green"><svg class="ti"><use href="#axes"/></svg></span>
      </nav>
      <div class="pmain">
        <div class="crumb"><svg class="i22 wh"><use href="#objsq"/></svg><span>Empty.006</span><svg class="i22 pini"><use href="#pin"/></svg></div>
        <div class="namefield"><span class="nf-icon"><svg class="i22 wh"><use href="#objsq"/></svg><svg class="i10"><use href="#chev"/></svg></span><span class="nf-text">Empty.006</span></div>
        <div class="tpanel">
          <div class="phead wide"><svg class="pchev"><use href="#chev"/></svg><span>Transform</span><svg class="gripi"><use href="#grip"/></svg></div>
          <div class="pgroup">
            <label>Location X</label><div class="pnum"><b>0 m</b></div><svg class="lk"><use href="#lock"/></svg><i class="dot"></i>
            <label>Y</label><div class="pnum"><b>0 m</b></div><svg class="lk"><use href="#lock"/></svg><i class="dot"></i>
            <label>Z</label><div class="pnum driven"><b>6.8 m</b></div><svg class="lk"><use href="#lock"/></svg><svg class="animk"><use href="#anim"/></svg>
          </div>
          <div class="pgroup">
            <label>Rotation X</label><div class="pnum"><b>0°</b></div><svg class="lk"><use href="#lock"/></svg><i class="dot"></i>
            <label>Y</label><div class="pnum"><b>0°</b></div><svg class="lk"><use href="#lock"/></svg><i class="dot"></i>
            <label>Z</label><div class="pnum"><b>0°</b></div><svg class="lk"><use href="#lock"/></svg><i class="dot"></i>
          </div>
          <div class="pgroup">
            <label>Mode</label><div class="select inp"><span>XYZ Euler</span><svg class="i10"><use href="#chev"/></svg></div><span></span><i class="dot"></i>
          </div>
          <div class="pgroup">
            <label>Scale X</label><div class="pnum"><b>1.000</b></div><svg class="lk"><use href="#lock"/></svg><i class="dot"></i>
            <label>Y</label><div class="pnum"><b>1.000</b></div><svg class="lk"><use href="#lock"/></svg><i class="dot"></i>
            <label>Z</label><div class="pnum"><b>1.000</b></div><svg class="lk"><use href="#lock"/></svg><i class="dot"></i>
          </div>
        </div>
      </div>
      <i class="pscroll"></i>
    </div>
  </section>
</div>
<script src="script.js"></script>
</body>
</html>
```

FILE: styles.css
```css
* { box-sizing: border-box; }
html, body { margin: 0; height: 100%; }
body {
  width: 1692px; height: 990px; overflow: hidden; display: flex;
  background: #181818; color: #dcdcdc;
  font: 16px/1 "DejaVu Sans", sans-serif;
}
.defs { position: absolute; width: 0; height: 0; }
svg { display: block; flex: none; overflow: visible; }
.i10 { width: 10px; height: 10px; }
.i20 { width: 20px; height: 20px; }
.i22 { width: 22px; height: 22px; }
.i24 { width: 24px; height: 24px; }

/* ---- viewport ---- */
.viewport-area { width: 1192px; height: 990px; display: flex; flex-direction: column; flex: none; }
.vp-header { height: 75px; background: #353535; flex: none; padding-top: 4px; overflow: hidden; }
.hrow { height: 28px; display: flex; padding-right: 12px; }
.hrow.second { margin-top: 11px; padding-right: 11px; }
.spacer { flex: 1; }
.pill {
  height: 28px; border-radius: 8px; background: #282828; box-shadow: 0 0 0 1px #2f2f2f inset;
  display: flex; align-items: center; overflow: hidden; flex: none; color: #dcdcdc;
}
.txt { color: #e0e0e0; }
.global { width: 106px; margin-left: -10px; }
.global .txt { margin-left: 10px; }
.global .i10 { margin-left: 11px; }
.linkp { width: 44.500px; margin-left: 8px; padding-left: 6px; }
.linkp .i24 { color: #d0d0d0; }
.snap { width: 73.500px; margin-left: 9px; }
.prop { width: 73px; margin-left: 8.500px; }
.seg { width: 27.500px; height: 100%; display: flex; align-items: center; justify-content: center; flex: none; }
.seg.wide { flex: 1; justify-content: flex-start; padding-left: 6px; gap: 8px; }
.prop .seg.wide { gap: 0; padding-left: 6px; }
.seg.grey { background: #545454; }
.seg.mid { background: #3c3c3c; width: 100%; }
.seg.blue { background: #4772b3; color: #fff; }
.seg + .seg { border-left: 1px solid #2a2a2a; }
.seg.blue + .seg { border-left: 0; }
.dimfg { color: #9a9a9a; }
.dimfg .i24 { width: 20px; height: 20px; }
.xr .dimfg .i24 { width: 23px; height: 23px; }
.xr .dimfg { color: #6e6e6e; }
.faint { color: #555; }
.whitebox { width: 18px; height: 18px; background: #e6e6e6; }
.vis { width: 45px; padding-left: 3px; }
.vis .i24 { width: 26px; height: 26px; color: #e0e0e0; }
.vis .i10 { margin-left: 3px; }
.gizp { width: 56px; margin-left: 8.500px; }
.gizp .seg:last-child { width: 28.500px; }
.ovp { width: 57px; margin-left: 8.500px; }
.ovp .cw { width: 29.500px; }
.xr { width: 27px; margin-left: 8.500px; background: #3c3c3c; box-shadow: none; }
.shade { width: 140.500px; margin-left: 8.500px; }
.shade .i24 { width: 22px; height: 22px; }
.shade .seg { width: 28px; }
.disc { width: 21px; height: 21px; border-radius: 50%; background: #cfcfcf; }
.shade .seg:last-child { flex: 1; }
.shade .seg.grey:nth-child(4) { color: #a8a8a8; }
.options { width: 95px; padding-left: 12px; }
.options .i10 { margin-left: 10px; }

.vp-body { flex: 1; display: flex; min-height: 0; }
.canvas { width: 1163px; position: relative; background: #393939; overflow: hidden; }
.scene3d { position: absolute; left: 0; top: 0; width: 1163px; height: 915px; }
.gz { font: bold 15px "DejaVu Sans", sans-serif; text-anchor: middle; fill: #0000007a; }
.gizmo { position: absolute; left: 720px; top: 0; width: 130px; height: 150px; }
.navgiz { position: absolute; left: 808px; top: 135px; display: flex; flex-direction: column; gap: 3px; }
.navbtn { width: 42px; height: 42px; border-radius: 50%; background: #2b2b2b; display: flex; align-items: center; justify-content: center; color: #dcdcdc; }

.npanel {
  position: absolute; left: 874px; top: 1px; width: 277px; height: 441px;
  background: #3d3d3d; border-radius: 6px; padding: 0 13px;
}
.phead { height: 38px; display: flex; align-items: center; color: #e0e0e0; margin-left: -2px; }
.pchev { width: 15px; height: 15px; margin-right: 6px; color: #b8b8b8; }
.gripi { width: 15px; height: 6px; margin-left: auto; color: #9d9d9d; }
.npanel .gripi { margin-right: -3px; }
.flabel { height: 29px; display: flex; align-items: center; color: #c6c6c6; margin-top: 4.300px; margin-bottom: 1px; }
.flabel.first { margin-top: 10px; }
.vec { display: grid; grid-template-columns: 190px 21px; column-gap: 25.500px; row-gap: 1px; align-items: center; }
.lk { width: 21px; height: 17px; color: #949494; margin-top: -3px; }
.num {
  height: 27.800px; background: #545454; display: flex; align-items: center; justify-content: space-between;
  padding: 0 20px 0 23px; color: #dcdcdc; text-shadow: 0 1px 1px #0006;
}
.num b, .pnum b { font-weight: normal; }
.vec .num:nth-child(1) { border-radius: 6px 6px 0 0; }
.vec .num:nth-child(5) { border-radius: 0 0 6px 6px; }
.num.editing { background: #5f0f80; padding: 0 0 0 11px; justify-content: flex-start; }
.sel { height: 26px; width: 77px; background: #4772b3; border-right: 2px solid #7fa8e8; display: flex; align-items: center; padding-left: 5px; color: #ecf0ff; white-space: nowrap; text-shadow: none; }
.select { height: 27px; background: #282828; border-radius: 6px; display: flex; align-items: center; justify-content: space-between; color: #dcdcdc; padding: 0 5px 0 11px; }
.select.side { margin-top: 5px; width: 251px; }

.vtabs { width: 29px; background: #181818; padding-top: 6px; display: flex; flex-direction: column; flex: none; }
.vtab {
  width: 26px; background: #2a2a2a; border: 1px solid #3a3a3a; border-left: 0; border-radius: 0 6px 6px 0;
  display: flex; align-items: center; justify-content: center; color: #d8d8d8; padding-left: 2px;
}
.vtab span { writing-mode: vertical-rl; transform: rotate(180deg); }
.vtab.item { height: 58px; background: #2f2f2f; color: #ececec; }
.vtab.tool { height: 55px; margin-top: 7px; }
.vtab.view { height: 59px; margin-top: 6px; }

/* ---- narrow strip ---- */
.strip { width: 47px; flex: none; padding-left: 3px; display: flex; flex-direction: column; }
.strip-top { height: 36px; width: 41px; background: #2b2b2b; padding: 3px 0 0 12px; overflow: hidden; }
.stripbtn { display: flex; width: 40px; height: 29px; border: 1px solid #3a3a3a; border-radius: 7px 0 0 7px; border-right: 0; align-items: center; padding-left: 6px; color: #dcdcdc; }
.strip-img {
  height: 26px; width: 41px; border-radius: 0 0 5px 5px; overflow: hidden; position: relative;
  background: linear-gradient(120deg, #d2d2d2, #c2c2c2 40%, #e6e6e6);
}
.strip-img span { position: absolute; left: 13px; top: 16px; color: #fff; font-size: 15px; }
.strip-low {
  margin-top: 3px; flex: 1; position: relative; width: 39px;
  background-color: #1f1f1f;
  background-image: radial-gradient(circle, #2b2b2b 1.500px, transparent 2px);
  background-size: 20px 20.400px;
  background-position: -5px -4px;
  overflow: hidden;
}
.stripbtn.low { margin: 5px 0 0 10px; }
.stripbtn.low .i24 { width: 22px; height: 22px; }
.handle { position: absolute; top: 59px; width: 12px; height: 19px; background: #181818; color: #c0c0c0; font-size: 20px; line-height: 16px; text-align: center; }
.handle.left { left: -3px; border-radius: 0 5px 5px 0; }
.handle.right { left: 28px; border-radius: 5px 0 0 5px; }
.stripbar { position: absolute; left: 30px; top: 51px; bottom: 0; width: 6px; background: #383838; border-radius: 3px 3px 0 0; }

/* ---- right column ---- */
.rightcol { flex: 1; display: flex; flex-direction: column; gap: 4px; min-width: 0; }
.outliner { height: 463px; border-radius: 0 0 6px 6px; overflow: hidden; display: flex; flex-direction: column; background: #282828; flex: none; }
.ohead { height: 36px; background: #2e2e2e; flex: none; display: flex; padding: 3px 0 0 11px; }
.hbtn { height: 29px; border: 1px solid #3c3c3c; border-radius: 7px; display: flex; align-items: center; padding-left: 6px; color: #dcdcdc; flex: none; }
.hbtn .i10 { margin-left: 3px; }
.m1 { width: 46px; }
.m1 .i24, .m2 .i24 { width: 22px; height: 22px; }
.m2 { width: 46px; margin-left: 7px; }
.searchbox { height: 29px; background: #1d1d1d; border: 1px solid #3c3c3c; border-radius: 7px; display: flex; align-items: center; padding-left: 6px; color: #dcdcdc; flex: none; }
.s1 { width: 173px; margin-left: 22px; }
.m3 { width: 46px; margin-left: 55px; padding-left: 3px; }
.m3 .i24 { width: 23px; height: 23px; }
.m4 { width: 29px; margin-left: 7px; background: #545454; padding-left: 3px; }
.m4 .i24 { width: 22px; height: 22px; }

.olist { flex: 1; position: relative; overflow: hidden; }
.rows { margin-top: -21.500px; }
.row { height: 29px; display: flex; align-items: center; padding-left: 69px; background: #282828; color: #d6d6d6; }
.row.alt { background: #2b2b2b; }
.row.child { padding-left: 98px; }
.row.dim { color: #7c7c7c; }
.row.child.dim { color: #6a6a6a; }
.row.active { background: #334d80; }
.row.active .name { color: #f5a623; }
.arrow { width: 8px; height: 10px; flex: none; background: #cfcfcf; clip-path: polygon(0 0, 100% 50%, 0 100%); }
.dim .arrow { background: #7c7c7c; }
.arrow.down { clip-path: polygon(0 0, 100% 0, 50% 100%); }
.ic { width: 21px; height: 21px; flex: none; }
.row > .ic { margin-left: 14px; }
.col { color: #828282; }
.o { color: #7a5535; }
.or { color: #ca854c; }
.gd { color: #11705a; }
.bd { color: #3c5488; }
.gb { color: #12b68c; }
.bb { color: #4f78c4; }
.an { color: #9aa8c4; }
.name { margin-left: 9px; padding-top: 3px; white-space: nowrap; flex: none; }
.subs { flex: 1; min-width: 0; display: flex; gap: 8px; padding-left: 32px; overflow: hidden; height: 29px; align-items: center; }
.sub { position: relative; width: 21px; height: 21px; flex: none; }
.sub.counted { margin-right: 2px; }
.sub b { position: absolute; right: -5.500px; bottom: -2px; font: 12px/1 "DejaVu Sans", sans-serif; color: #d8d8d8; }
.sub.box { width: 29px; height: 27px; margin: 0 -4px 0 -3px; background: #4f5452; border-radius: 7px; padding: 3px 3px; }
.sub.box .ic { width: 23px; height: 21px; }
.activebox { width: 29px; height: 27px; margin-left: 10px; margin-right: -4px; background: #5d719b; border-radius: 7px; border: 1px solid #6f83ab; display: flex; align-items: center; justify-content: center; flex: none; }
.rest { width: 101px; flex: none; display: flex; margin-top: -2px; }
.sl { width: 29px; height: 29px; display: flex; align-items: center; justify-content: center; }
.ck { width: 15px; height: 15px; margin-left: 2px; }
.ey { width: 20px; height: 15px; color: #e0e0e0; }
.ey.off { color: #6a6a6a; }
.ey.gr { color: #8a8a8a; }
.rn { width: 20px; height: 18px; color: #e2e2e2; }
.active .rn, .active .ey { color: #e6e6e6; }
.treeline { position: absolute; left: 42px; top: 0; width: 1px; height: 406px; background: #6e6e6e; z-index: 1; }
.treeline.sub { left: 71px; top: 246px; height: 44px; }
.vscroll { position: absolute; right: 2px; top: 95px; width: 5px; height: 312px; background: #3c3c3c; border-radius: 3px; }
.hscroll { position: absolute; left: 11px; bottom: 1px; width: 400px; height: 5px; background: #3c3c3c; border-radius: 3px; }

.props { flex: 1; min-height: 0; border-radius: 6px 6px 0 0; overflow: hidden; display: flex; flex-direction: column; background: #303030; }
.phdr { height: 36px; background: #2e2e2e; flex: none; display: flex; padding: 4px 0 0 11px; }
.s2 { width: 173px; margin-left: 82px; }
.m5 { width: 29px; margin-left: 101px; padding-left: 8px; }
.m5 .i10 { margin: 0; width: 12px; height: 12px; }
.pbody { flex: 1; display: flex; position: relative; min-height: 0; }
.ptabs { width: 42px; background: #1d1d1d; flex: none; padding-top: 12px; display: flex; flex-direction: column; align-items: flex-end; }
.ptab { width: 38px; height: 40px; display: flex; align-items: center; justify-content: center; color: #a9a9a9; flex: none; }
.ti { width: 22px; height: 22px; }
.psep { width: 35px; height: 1px; background: #323232; margin-bottom: 10px; flex: none; }
.ptab.red { color: #a84d50; }
.ptab.white { color: #dcdcdc; }
.ptab.on { background: #303030; border-radius: 7px 0 0 7px; color: #e79a5c; }
.ptab.bluei { color: #5680c8; }
.ptab.green { color: #12b68c; }
.pmain { flex: 1; padding: 0 12px 0 11px; min-width: 0; }
.crumb { height: 54px; display: flex; align-items: center; padding-left: 5px; color: #dcdcdc; text-shadow: 0 1px 1px #0006; }
.crumb span { margin-left: 14px; padding-top: 2px; }
.pini { margin-left: auto; margin-right: 1px; color: #8c8c8c; }
.wh { color: #e6e6e6; }
.namefield { height: 28px; margin-top: 12px; margin-left: 1px; display: flex; border: 1px solid #3c3c3c; border-radius: 7px; overflow: hidden; background: #1c1c1c; }
.nf-icon { width: 45px; background: #303030; border-right: 1px solid #3c3c3c; display: flex; align-items: center; padding-left: 6px; flex: none; }
.nf-icon .i22 { width: 21px; height: 21px; }
.nf-icon .i10 { margin-left: 2px; }
.nf-text { display: flex; align-items: center; padding: 2px 0 0 11px; color: #dcdcdc; }
.tpanel { margin-top: 15px; background: #3d3d3d; border-radius: 6px 6px 0 0; height: 400px; }
.phead.wide { margin-left: 0; padding: 0 10px 0 11px; }
.phead.wide .pchev { margin-right: 5px; }
.pgroup { display: grid; grid-template-columns: 140px 177px 26px 36px; row-gap: 1px; align-items: center; margin-top: 8px; }
.phead + .pgroup { margin-top: 11px; }
.pgroup label { text-align: right; color: #d6d6d6; text-shadow: 0 1px 1px #0006; grid-column: 1; }
.pgroup > .pnum, .pgroup > .select { margin-left: 14px; width: 163px; }
.pgroup .lk { margin-left: 5px; }
.pnum { height: 28px; background: #545454; display: flex; align-items: center; justify-content: center; color: #dcdcdc; text-shadow: 0 1px 1px #0006; }
.pnum.driven { background: #74259b; color: #e8e0ec; }
.pgroup .pnum:nth-child(2) { border-top-left-radius: 5px; }
.pgroup .pnum:nth-child(10) { border-bottom-left-radius: 6px; }
.select.inp { padding: 0 4px 0 11px; }
.dot { width: 6px; height: 6px; border-radius: 50%; background: #cfcfcf; justify-self: center; }
.animk { width: 19px; height: 18px; color: #d8d8d8; justify-self: center; margin-left: 2px; }
.pscroll { position: absolute; right: 2px; top: 15px; bottom: 0; width: 5px; background: #3e3e3e; border-radius: 3px 3px 0 0; }
```

FILE: script.js
```javascript
// Perspective ground grid: two line families meeting at vanishing points.
(function () {
  var W = 1163, H = 990;
  var a = '', b = '', i, k;
  // Family running along the X axis; inverse-distance spacing from the red axis.
  for (i = -80; i <= 2; i++) {
    if (i === 0) continue;
    var inv = 0.00305 - 0.00046 * i;
    if (inv <= 0) continue;
    var s = (1 / inv) / 2192;
    a += 'M0 ' + (405 + s * 2192).toFixed(1) + 'L' + W + ' ' + (405 + s * (2192 + W)).toFixed(1);
  }
  // Family running along the Y axis; evenly spaced where they cross the bottom edge.
  for (k = -60; k <= 8; k++) {
    if (k === 0) continue;
    b += 'M970 385L' + (19 + 320 * k) + ' ' + H;
  }
  document.getElementById('grid-a').setAttribute('d', a);
  document.getElementById('grid-b').setAttribute('d', b);
})();
```
